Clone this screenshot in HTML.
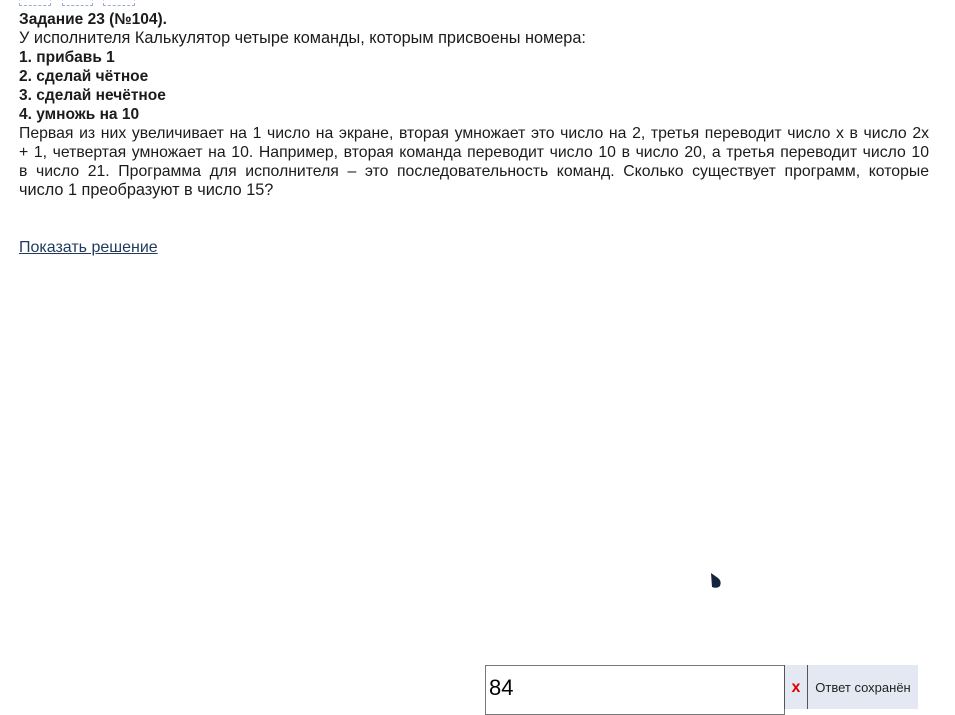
<!DOCTYPE html>
<html><head><meta charset="utf-8"><style>
body{margin:0;width:955px;height:709px;overflow:hidden;background:#fff;font-family:"Liberation Sans",Arial,sans-serif;color:#1b1b1b;position:relative}
.t{position:absolute;left:19px;width:910px;font-size:16.3px;line-height:19px;white-space:nowrap}
.j{text-align:justify;text-align-last:justify;font-size:15.8px;white-space:normal;overflow:hidden;height:19px}
b{font-weight:bold;font-size:15.5px}
.ic{position:absolute;top:-8px;height:12px;border:1px dashed #9aaed0}
</style></head><body>
<div class="ic" style="left:19px;width:30px"></div>
<div class="ic" style="left:62px;width:29px"></div>
<div class="ic" style="left:103px;width:30px"></div>
<div class="t" style="top:10px"><b>Задание 23 (№104).</b></div>
<div class="t" style="top:29px">У исполнителя Калькулятор четыре команды, которым присвоены номера:</div>
<div class="t" style="top:48px"><b>1. прибавь 1</b></div>
<div class="t" style="top:67px"><b>2. сделай чётное</b></div>
<div class="t" style="top:86px"><b>3. сделай нечётное</b></div>
<div class="t" style="top:105px"><b>4. умножь на 10</b></div>
<div class="t j" style="top:124px">Первая из них увеличивает на 1 число на экране, вторая умножает это число на 2, третья переводит число x в число 2x</div>
<div class="t j" style="top:143px">+ 1, четвертая умножает на 10. Например, вторая команда переводит число 10 в число 20, а третья переводит число 10</div>
<div class="t j" style="top:162px">в число 21. Программа для исполнителя – это последовательность команд. Сколько существует программ, которые</div>
<div class="t" style="top:181px">число 1 преобразуют в число 15?</div>
<div class="t" style="top:238px;color:#1f3a5f;text-decoration:underline;font-size:16px">Показать решение</div>
<svg style="position:absolute;left:709px;top:572px" width="14" height="18"><path d="M2 1 L9 6 Q13 9 11 14 Q8 17 3 15 Z" fill="#14243d"/></svg>
<div style="position:absolute;left:485px;top:665px;width:300px;height:50px;border:1px solid #777;box-sizing:border-box;font-size:22px;line-height:44px;padding-left:3px;color:#000">84</div>
<div style="position:absolute;left:784px;top:665px;width:24px;height:44px;background:#e4e8f3;border-left:1px solid #555;border-right:1px solid #555;box-sizing:border-box;color:#d00;font-weight:bold;font-size:16px;line-height:46px;text-align:center">x</div>
<div style="position:absolute;left:808px;top:665px;width:110px;height:44px;background:#e4e8f3;font-size:13px;line-height:46px;text-align:center;color:#222">Ответ сохранён</div>
</body></html>
